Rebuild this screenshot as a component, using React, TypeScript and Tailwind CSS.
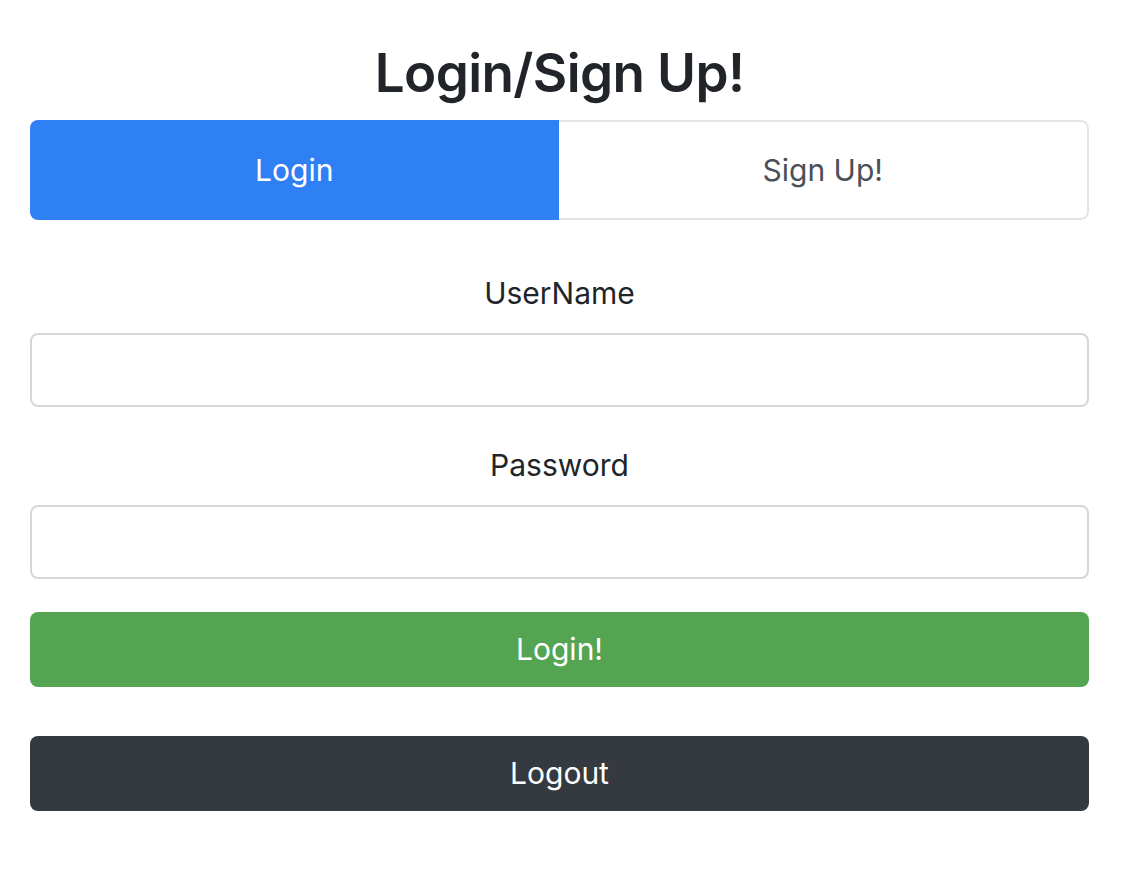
export default function App() {
  return (
    <div
      className="min-h-[874px] w-[1130px] bg-white text-[#212529]"
      style={{ fontFamily: 'Inter, "Noto Sans", "Liberation Sans", sans-serif' }}
    >
      <div className="ml-[30px] w-[1059px] pt-[40px]">
        <h1 className="text-center text-[53px] font-semibold leading-[67px] tracking-[-0.6px]">
          Login/Sign Up!
        </h1>
        <div className="mt-[13px] flex h-[100px] overflow-hidden rounded-[8px]">
          <div className="flex flex-1 items-center justify-center bg-[#2f80f5] text-[30px] text-white">
            Login
          </div>
          <div className="flex flex-1 items-center justify-center rounded-r-[8px] border-2 border-l-0 border-[#e2e5e8] text-[30px] text-[#495057]">
            Sign Up!
          </div>
        </div>
        <div className="mt-[49px] flex flex-col">
          <label className="text-center text-[30px] leading-[48px]">UserName</label>
          <input className="mt-[16px] h-[74px] rounded-[8px] border-2 border-[#d3d7db] bg-white outline-none" />
          <label className="mt-[34px] text-center text-[30px] leading-[48px]">Password</label>
          <input
            type="password"
            className="mt-[16px] h-[74px] rounded-[8px] border-2 border-[#d3d7db] bg-white outline-none"
          />
          <button className="mt-[33px] flex h-[75px] items-center justify-center rounded-[8px] bg-[#54a451] text-[30px] text-white">
            Login!
          </button>
          <button className="mt-[49px] flex h-[75px] items-center justify-center rounded-[8px] bg-[#343a40] text-[30px] text-white">
            Logout
          </button>
        </div>
      </div>
    </div>
  );
}
